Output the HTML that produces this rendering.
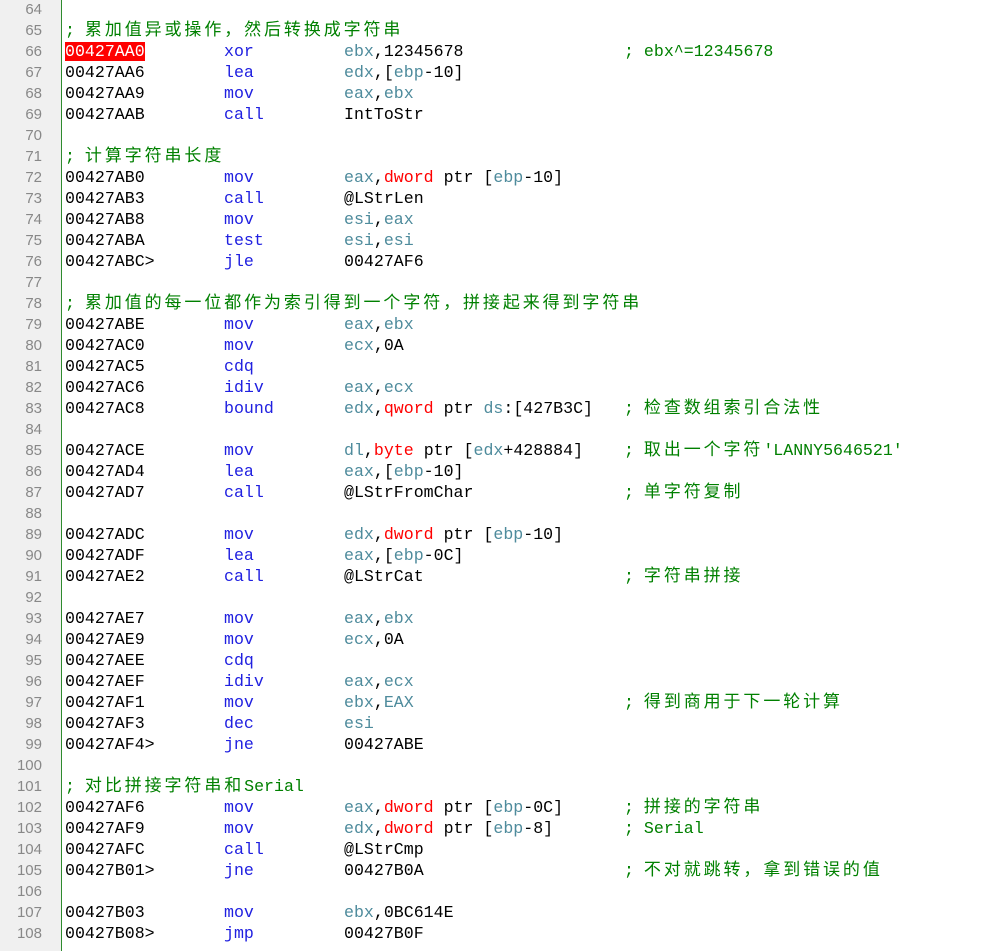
<!DOCTYPE html>
<html><head><meta charset="utf-8"><style>
body{margin:0;width:985px;height:951px;background:#fff;overflow:hidden;position:relative;font-family:"Liberation Mono","Noto Sans CJK SC",monospace;font-size:16.6px;}
#g{position:absolute;left:0;top:0;width:61px;height:951px;background:#f0f0f0;border-right:1px solid #2e8b2e;}
.l{position:absolute;left:0;height:21px;line-height:21px;white-space:pre;width:985px;}
.n{position:absolute;right:943px;color:#888;font-family:"Liberation Sans",sans-serif;font-size:15px;}
.a{position:absolute;left:65px;color:#000;}
.m{position:absolute;left:224px;color:#2020e0;}
.o{position:absolute;left:344px;color:#000;}
.c{position:absolute;left:624px;color:#008000;}
.c0{position:absolute;left:65px;color:#008000;}
.z{font-family:"Noto Sans CJK SC",sans-serif;font-size:17px;letter-spacing:2.9px;line-height:1px;}
.r{color:#4e8b9c}.k{color:#f00}
.hl{background:#f00;color:#fff}
</style></head><body><div id="g"></div>
<script>
const L=[
[64],
[65,'c0','; 累加值异或操作，然后转换成字符串'],
[66,'<span class="hl">00427AA0</span>','xor','<span class=r>ebx</span>,12345678','; ebx^=12345678'],
[67,'00427AA6','lea','<span class=r>edx</span>,[<span class=r>ebp</span>-10]'],
[68,'00427AA9','mov','<span class=r>eax</span>,<span class=r>ebx</span>'],
[69,'00427AAB','call','IntToStr'],
[70],
[71,'c0','; 计算字符串长度'],
[72,'00427AB0','mov','<span class=r>eax</span>,<span class=k>dword</span> ptr [<span class=r>ebp</span>-10]'],
[73,'00427AB3','call','@LStrLen'],
[74,'00427AB8','mov','<span class=r>esi</span>,<span class=r>eax</span>'],
[75,'00427ABA','test','<span class=r>esi</span>,<span class=r>esi</span>'],
[76,'00427ABC>','jle','00427AF6'],
[77],
[78,'c0','; 累加值的每一位都作为索引得到一个字符，拼接起来得到字符串'],
[79,'00427ABE','mov','<span class=r>eax</span>,<span class=r>ebx</span>'],
[80,'00427AC0','mov','<span class=r>ecx</span>,0A'],
[81,'00427AC5','cdq',''],
[82,'00427AC6','idiv','<span class=r>eax</span>,<span class=r>ecx</span>'],
[83,'00427AC8','bound','<span class=r>edx</span>,<span class=k>qword</span> ptr <span class=r>ds</span>:[427B3C]','; 检查数组索引合法性'],
[84],
[85,'00427ACE','mov','<span class=r>dl</span>,<span class=k>byte</span> ptr [<span class=r>edx</span>+428884]',"; 取出一个字符'LANNY5646521'"],
[86,'00427AD4','lea','<span class=r>eax</span>,[<span class=r>ebp</span>-10]'],
[87,'00427AD7','call','@LStrFromChar','; 单字符复制'],
[88],
[89,'00427ADC','mov','<span class=r>edx</span>,<span class=k>dword</span> ptr [<span class=r>ebp</span>-10]'],
[90,'00427ADF','lea','<span class=r>eax</span>,[<span class=r>ebp</span>-0C]'],
[91,'00427AE2','call','@LStrCat','; 字符串拼接'],
[92],
[93,'00427AE7','mov','<span class=r>eax</span>,<span class=r>ebx</span>'],
[94,'00427AE9','mov','<span class=r>ecx</span>,0A'],
[95,'00427AEE','cdq',''],
[96,'00427AEF','idiv','<span class=r>eax</span>,<span class=r>ecx</span>'],
[97,'00427AF1','mov','<span class=r>ebx</span>,<span class=r>EAX</span>','; 得到商用于下一轮计算'],
[98,'00427AF3','dec','<span class=r>esi</span>'],
[99,'00427AF4>','jne','00427ABE'],
[100],
[101,'c0','; 对比拼接字符串和Serial'],
[102,'00427AF6','mov','<span class=r>eax</span>,<span class=k>dword</span> ptr [<span class=r>ebp</span>-0C]','; 拼接的字符串'],
[103,'00427AF9','mov','<span class=r>edx</span>,<span class=k>dword</span> ptr [<span class=r>ebp</span>-8]','; Serial'],
[104,'00427AFC','call','@LStrCmp'],
[105,'00427B01>','jne','00427B0A','; 不对就跳转，拿到错误的值'],
[106],
[107,'00427B03','mov','<span class=r>ebx</span>,0BC614E'],
[108,'00427B08>','jmp','00427B0F']];
const z=s=>s.replace(/[\u3000-\u9fff\uff00-\uffef]+/g,m=>`<span class=z>${m}</span>`);
let h='';
L.forEach((x,i)=>{let t=-1+i*21;h+=`<div class=l style="top:${t}px"><span class=n>${x[0]}</span>`;
if(x[1]==='c0')h+=`<span class=c0>${z(x[2])}</span>`;
else if(x.length>1){h+=`<span class=a>${x[1]}</span><span class=m>${x[2]}</span><span class=o>${x[3]}</span>`;if(x[4])h+=`<span class=c>${z(x[4])}</span>`;}
h+='</div>';});
document.body.insertAdjacentHTML('beforeend',h);
</script>
</body></html>
